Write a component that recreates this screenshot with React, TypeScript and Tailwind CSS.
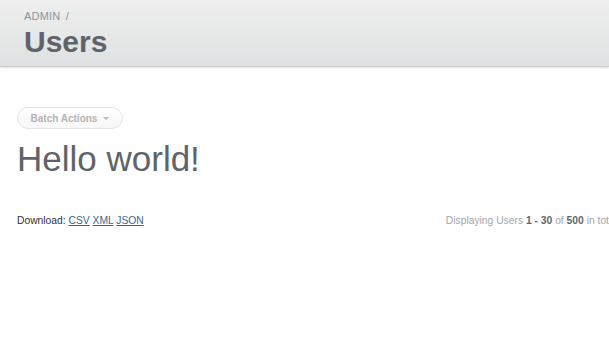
export default function App() {
    return (
        <div className="w-[609px] h-[339px] overflow-hidden bg-white font-['Liberation_Sans',Arial,sans-serif]">
            <header className="h-[67px] border-b-[1px] border-[#cdcdcd] bg-gradient-to-b from-[#efefef] to-[#dfe1e2] shadow-[0_1px_2px_rgba(0,0,0,0.12)] px-6 pt-[10px]">
                <div className="text-[11px] leading-[13px] text-[#8a949e] tracking-[0.2px]">
                    ADMIN <span className="ml-[2px]">/</span>
                </div>
                <h2 className="mt-[1px] text-[30px] leading-[36px] font-bold text-[#5e6469]">
                    Users
                </h2>
            </header>
            <main className="w-[634px] px-[17px] pt-[40px]">
                <button className="flex items-center h-[22px] w-[106px] justify-center gap-[6px] rounded-full border-[1px] border-[#e4e4e4] bg-gradient-to-b from-white to-[#f7f7f7] text-[10px] font-bold text-[#b4b4b4]">
                    Batch Actions
                    <span className="w-0 h-0 border-l-[3px] border-r-[3px] border-t-[3px] border-l-transparent border-r-transparent border-t-[#bbbbbb]" />
                </button>
                <h1 className="mt-[10px] text-[35px] leading-[40px] text-[#5e6469]">
                    Hello world!
                </h1>
                <div className="flex justify-between mt-[35px] text-[10.3px] leading-[13px]">
                    <p className="text-[#323537]">
                        Download:{' '}
                        <a href="#" className="text-[#38678b] underline">CSV</a>{' '}
                        <a href="#" className="text-[#38678b] underline">XML</a>{' '}
                        <a href="#" className="text-[#38678b] underline">JSON</a>
                    </p>
                    <p className="text-[#a3a6a9] whitespace-nowrap">
                        Displaying Users <b className="text-[#5e6469]">1 - 30</b> of{' '}
                        <b className="text-[#5e6469]">500</b> in total
                    </p>
                </div>
            </main>
        </div>
    )
}
